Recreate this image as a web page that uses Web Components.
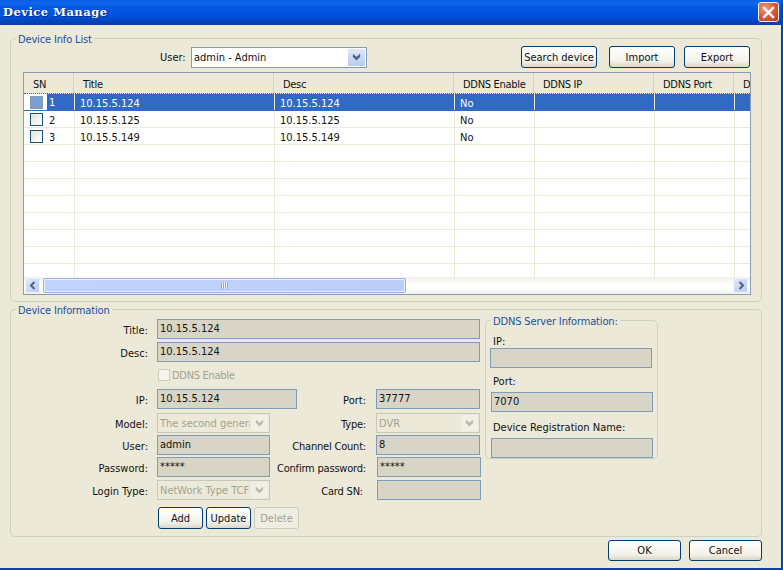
<!DOCTYPE html>
<html>
<head>
<meta charset="utf-8">
<title>Device Manage</title>
<style>
html, body { margin: 0; padding: 0; background: #ece9d8; }
body { width: 783px; height: 570px; overflow: hidden; }
</style>
</head>
<body>
<device-manage></device-manage>
<script>
const FONT = '"DejaVu Sans Condensed", "DejaVu Sans", sans-serif'
const CHEVRON = `<svg width="9" height="8" viewBox="0 0 9 8"><path d="M1 1.5 L4.5 5 L8 1.5 M1 3 L4.5 6.5 L8 3" fill="none" stroke="currentColor" stroke-width="1.3"/></svg>`

class XpGroup extends HTMLElement {
    constructor() {
        super()
        const shadow = this.attachShadow({ mode: 'open' })
        shadow.innerHTML = `
        <style>
        :host { display:block; position:relative; box-sizing:border-box; border:1px solid #d0d0bf; border-radius:5px; }
        .legend { position:absolute; left:5px; top:-6px; padding:0 2px; background:#ece9d8; color:#1c4fa0; font-size:11px; line-height:13px; letter-spacing:-.15px; white-space:nowrap; }
        </style>
        <span class="legend">${this.getAttribute('label')}</span>
        <slot></slot>`
    }
}
customElements.define('xp-group', XpGroup)

class XpButton extends HTMLElement {
    constructor() {
        super()
        const shadow = this.attachShadow({ mode: 'open' })
        shadow.innerHTML = `
        <style>
        :host { display:flex; align-items:center; justify-content:center; box-sizing:border-box; height:22px; border:1px solid #003c74; border-radius:3px;
            background:linear-gradient(#ffffff, #f3f2ea 70%, #d9d6c8); color:#111; font-size:11px; white-space:nowrap; }
        :host([disabled]) { border-color:#cfcdbc; background:#f0eee2; color:#a3a292; }
        </style>
        <slot></slot>`
    }
}
customElements.define('xp-button', XpButton)

class XpInput extends HTMLElement {
    constructor() {
        super()
        const shadow = this.attachShadow({ mode: 'open' })
        shadow.innerHTML = `
        <style>
        :host { display:flex; align-items:center; box-sizing:border-box; height:20px; padding:0 2px 1px 2px; border:1px solid #7f9db9; background:#d8d5c6; color:#111; font-size:11px; overflow:hidden; white-space:nowrap; }
        </style>
        <slot></slot>`
    }
}
customElements.define('xp-input', XpInput)

class XpCombo extends HTMLElement {
    constructor() {
        super()
        const shadow = this.attachShadow({ mode: 'open' })
        shadow.innerHTML = `
        <style>
        :host { display:flex; align-items:center; box-sizing:border-box; height:20px; border:1px solid #c9c7b8; background:#ece9d8; color:#a3a292; font-size:11px; white-space:nowrap; overflow:hidden; }
        :host([enabled]) { border-color:#7f9db9; background:#fff; color:#111; }
        .text { flex:1; min-width:0; padding-left:2px; overflow:hidden; }
        .btn { flex:none; width:17px; align-self:stretch; margin:1px; display:flex; align-items:center; justify-content:center; background:#f1efe6; color:#b9b8aa; border-radius:1px; }
        :host([enabled]) .btn { background:linear-gradient(#dfe7f8,#b9cbf0); color:#4d6185; }
        </style>
        <span class="text"><slot></slot></span>
        <span class="btn">${CHEVRON}</span>`
    }
}
customElements.define('xp-combo', XpCombo)

class TitleBar extends HTMLElement {
    constructor() {
        super()
        const shadow = this.attachShadow({ mode: 'open' })
        shadow.innerHTML = `
        <style>
        :host { display:flex; align-items:center; justify-content:space-between; flex:none; box-sizing:border-box; height:25px; padding:0 2px 0 3px;
            background:linear-gradient(#0a5de0 0, #0f66ee 3px, #0457e2 8px, #0050dc 16px, #0342b8 22px, #0a3f9c 25px); }
        .title { color:#fff; font:bold 11.5px/1 "DejaVu Serif", serif; letter-spacing:.5px; text-shadow:1px 1px 0 #0a2d80; }
        .close { width:21px; height:20px; margin-top:-1px; box-sizing:border-box; border:1px solid #f2f2f2; border-radius:3px; background:radial-gradient(circle at 35% 30%, #ee9a80, #d9512c 60%, #b8391c); display:flex; align-items:center; justify-content:center; }
        </style>
        <span class="title">Device Manage</span>
        <span class="close"><svg width="13" height="13" viewBox="0 0 13 13"><path d="M2 2 L11 11 M11 2 L2 11" stroke="#fff" stroke-width="2.4" stroke-linecap="square"/></svg></span>`
    }
}
customElements.define('title-bar', TitleBar)

class DeviceTable extends HTMLElement {
    constructor() {
        super()
        const shadow = this.attachShadow({ mode: 'open' })
        const headCols = [50, 200, 180, 80, 120, 80, 17]
        const rowCols = [51, 200, 180, 80, 120, 80, 16]
        const heads = ['SN', 'Title', 'Desc', 'DDNS Enable', 'DDNS IP', 'DDNS Port', 'D']
        const data = [['1', '10.15.5.124', '10.15.5.124', 'No'], ['2', '10.15.5.125', '10.15.5.125', 'No'], ['3', '10.15.5.149', '10.15.5.149', 'No']]
        const head = heads.map(h => `<span class="h">${h}</span>`).join('')
        let rows = ''
        for (let i = 0; i < 11; i++) {
            const d = data[i] || []
            const sel = i === 0 ? ' sel' : ''
            rows += `<div class="row${sel}">`
            for (let c = 0; c < rowCols.length; c++) {
                if (c === 0 && d.length) rows += `<span class="c sn"><i class="box"></i><b>${d[0]}</b></span>`
                else rows += `<span class="c">${d[c] || ''}</span>`
            }
            rows += `</div>`
        }
        shadow.innerHTML = `
        <style>
        :host { display:flex; flex-direction:column; box-sizing:border-box; height:223px; border:1px solid #8a9db5; background:#fff; font-size:11px; color:#111; overflow:hidden; }
        .head { display:grid; grid-template-columns:${headCols.map(c => c + 'px').join(' ')}; flex:none; height:21px; background:#ece9d8; border-bottom:1px dotted #4a5f88; box-sizing:border-box; }
        .h { display:flex; align-items:center; padding:3px 0 0 9px; border-right:1px solid #d6d3c4; letter-spacing:-.3px; overflow:hidden; white-space:nowrap; }
        .row { display:grid; grid-template-columns:${rowCols.map(c => c + 'px').join(' ')}; height:17px; box-sizing:border-box; border-bottom:1px solid #ece9d8; flex:none; }
        .row.sel { background:#316ac5; color:#fff; border-bottom-color:#316ac5; }
        .c { display:flex; align-items:center; padding:2px 0 0 5px; border-right:1px solid #ece9d8; overflow:hidden; white-space:nowrap; }
        .sn { padding:0 0 0 6px; gap:6px; }
        .sn b { font-weight:normal; padding-top:2px; }
        .sel .sn { background:#fff; color:#111; }
        .sel .sn b { background:#316ac5; color:#fff; padding:0 20px 0 2px; margin-left:-2px; align-self:stretch; line-height:18px; }
        .box { flex:none; width:13px; height:13px; box-sizing:border-box; border:1px solid #1c5180; background:linear-gradient(135deg,#e5e4da,#fff); }
        .sel .box { background:#7c9fd3; border-color:#7f9db9; }
        .rows { flex:1; overflow:hidden; }
        .scroll { flex:none; box-sizing:border-box; display:flex; height:17px; padding:1px 2px 1px 1px; background:linear-gradient(#f1f0ea, #fdfdfb 40%, #fff 70%, #eeeee6); }
        .arrow { width:15px; flex:none; box-sizing:border-box; border-radius:2px; background:linear-gradient(135deg,#e2eafb,#b6c9f2); display:flex; align-items:center; justify-content:center; box-shadow:inset 0 0 0 1px #f0f4fd; }
        .thumb { width:363px; flex:none; box-sizing:border-box; margin-left:3px; border:1px solid #9ab2e6; border-radius:2px; background:linear-gradient(90deg,#c2d3fb,#bccdf8); display:flex; align-items:center; justify-content:center; box-shadow:inset 0 0 0 1px #e8effd; }
        .grip { width:7px; height:7px; background:repeating-linear-gradient(90deg,#8ea7dc 0 1px,#eef3fe 1px 2px); }
        .gap { flex:1; }
        </style>
        <div class="head">${head}</div>
        <div class="rows">${rows}</div>
        <div class="scroll">
            <span class="arrow"><svg width="8" height="9" viewBox="0 0 8 9"><path d="M5.5 1 L2 4.5 L5.5 8" fill="none" stroke="#4d6185" stroke-width="2"/></svg></span>
            <span class="thumb"><span class="grip"></span></span>
            <span class="gap"></span>
            <span class="arrow"><svg width="8" height="9" viewBox="0 0 8 9"><path d="M2.5 1 L6 4.5 L2.5 8" fill="none" stroke="#4d6185" stroke-width="2"/></svg></span>
        </div>`
    }
}
customElements.define('device-table', DeviceTable)

class DeviceInfoList extends HTMLElement {
    constructor() {
        super()
        const shadow = this.attachShadow({ mode: 'open' })
        shadow.innerHTML = `
        <style>
        :host { display:block; height:264px; flex:none; }
        xp-group { height:100%; padding:7px 10px 0 12px; display:flex; flex-direction:column; gap:4px; }
        .top { display:flex; align-items:center; height:22px; flex:none; }
        .user { margin-left:137px; width:31px; flex:none; }
        xp-combo { width:176px; height:21px; flex:none; }
        .search { width:76px; margin-left:154px; flex:none; }
        .imp { width:66px; margin-left:12px; flex:none; }
        .exp { width:66px; margin-left:9px; flex:none; }
        </style>
        <xp-group label="Device Info List">
            <div class="top">
                <span class="user">User:</span>
                <xp-combo enabled>admin - Admin</xp-combo>
                <xp-button class="search">Search device</xp-button>
                <xp-button class="imp">Import</xp-button>
                <xp-button class="exp">Export</xp-button>
            </div>
            <device-table></device-table>
        </xp-group>`
    }
}
customElements.define('device-info-list', DeviceInfoList)

class DeviceForm extends HTMLElement {
    constructor() {
        super()
        const shadow = this.attachShadow({ mode: 'open' })
        shadow.innerHTML = `
        <style>
        :host { display:block; height:228px; flex:none; margin-top:7px; }
        xp-group { height:100%; display:flex; padding:9px 0 0 0; }
        .form { width:469px; flex:none; display:grid; grid-template-columns:146px 113px 27px 69px 10px 104px; grid-auto-rows:min-content; align-items:center; }
        .l { text-align:right; padding:2px 9px 0 0; white-space:nowrap; }
        .l.r { grid-column:3 / 5; padding-right:0; letter-spacing:-.2px; }
        .l.c { grid-column:3 / 5; padding-right:3px; letter-spacing:-.2px; }
        .v { grid-column:2; }
        .wide { grid-column:2 / 7; }
        .mid { grid-column:2 / 4; }
        .e { grid-column:6; }
        .e1 { grid-column:6; margin-left:1px; margin-right:-1px; }
        .chk { grid-column:1 / 7; display:flex; align-items:center; gap:2px; padding-left:147px; color:#a3a292; height:27px; letter-spacing:-.3px; }
        .chk i { width:12px; height:12px; box-sizing:border-box; border:1px solid #cfcdbc; background:#f4f3ec; margin-top:-1px; }
        .chk span { margin-top:-1px; }
        .g2 { height:2px; grid-column:1 / 7; }
        .g3 { height:3px; grid-column:1 / 7; }
        .g4 { height:4px; grid-column:1 / 7; }
        .btns { grid-column:2 / 7; display:flex; gap:3px; margin:7px 0 0 1px; }
        .btns xp-button { width:45px; }
        .ddns { width:173px; height:139px; flex:none; margin:1px 0 0 5px; padding:0; display:block; }
        .ddns-in { display:flex; flex-direction:column; padding:14px 5px 0 4px; }
        .ddns-in span { height:13px; line-height:13px; margin-left:3px; white-space:nowrap; }
        .ddns-in xp-input { width:162px; flex:none; }
        </style>
        <xp-group label="Device Information">
            <div class="form">
                <span class="l">Title:</span><xp-input class="wide">10.15.5.124</xp-input>
                <div class="g3"></div>
                <span class="l">Desc:</span><xp-input class="wide">10.15.5.124</xp-input>
                <div class="chk"><i></i><span>DDNS Enable</span></div>
                <span class="l">IP:</span><xp-input class="mid">10.15.5.124</xp-input><span class="l" style="grid-column:4;padding:3px 0 0 0">Port:</span><xp-input class="e">37777</xp-input>
                <div class="g4"></div>
                <span class="l">Model:</span><xp-combo class="v">The second genera</xp-combo><span class="l r">Type:</span><xp-combo class="e">DVR</xp-combo>
                <div class="g2"></div>
                <span class="l">User:</span><xp-input class="v">admin</xp-input><span class="l r">Channel Count:</span><xp-input class="e">8</xp-input>
                <div class="g2"></div>
                <span class="l">Password:</span><xp-input class="v">*****</xp-input><span class="l r">Confirm password:</span><xp-input class="e1">*****</xp-input>
                <div class="g3"></div>
                <span class="l">Login Type:</span><xp-combo class="v">NetWork Type TCF</xp-combo><span class="l c">Card SN:</span><xp-input class="e1">&nbsp;</xp-input>
                <div class="btns"><xp-button>Add</xp-button><xp-button>Update</xp-button><xp-button disabled>Delete</xp-button></div>
            </div>
            <xp-group class="ddns" label="DDNS Server Information:">
                <div class="ddns-in">
                    <span>IP:</span>
                    <xp-input></xp-input>
                    <span style="margin-top:7px">Port:</span>
                    <xp-input style="margin:4px 0 0 1px">7070</xp-input>
                    <span style="margin-top:9px">Device Registration Name:</span>
                    <xp-input style="margin:4px 0 0 1px"></xp-input>
                </div>
            </xp-group>
        </xp-group>`
    }
}
customElements.define('device-form', DeviceForm)

class DeviceManage extends HTMLElement {
    constructor() {
        super()
        const shadow = this.attachShadow({ mode: 'open' })
        shadow.innerHTML = `
        <style>
        :host { display:flex; flex-direction:column; box-sizing:border-box; width:783px; height:570px; background:#ece9d8; border-right:2px solid #0a3fb0; border-bottom:2px solid #0a3fb0; font-family:${FONT}; font-size:11px; color:#111; }
        .body { flex:1; display:flex; flex-direction:column; padding:13px 19px 0 10px; }
        .foot { display:flex; justify-content:flex-end; gap:8px; margin-top:3px; }
        .foot xp-button { width:73px; height:21px; }
        </style>
        <title-bar></title-bar>
        <div class="body">
            <device-info-list></device-info-list>
            <device-form></device-form>
            <div class="foot"><xp-button>OK</xp-button><xp-button>Cancel</xp-button></div>
        </div>`
    }
}
customElements.define('device-manage', DeviceManage)
</script>
</body>
</html>
